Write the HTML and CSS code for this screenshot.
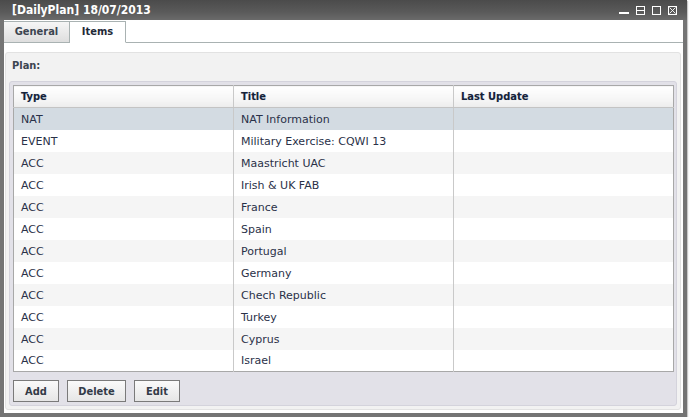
FILE: index.html
```html
<!DOCTYPE html>
<html>
<head>
<meta charset="utf-8">
<link rel="stylesheet" href="styles.css">
</head>
<body>
<div class="window">
  <div class="titlebar">
    <span class="title">[DailyPlan] 18/07/2013</span>
    <div class="controls">
      <svg class="ctl" width="10" height="9" viewBox="0 0 10 9"><rect x="0" y="6" width="10" height="2" fill="#fff"/></svg>
      <svg class="ctl" width="9" height="9" viewBox="0 0 9 9"><rect x="0.5" y="0.5" width="8" height="8" fill="none" stroke="#fff"/><line x1="0" y1="4.5" x2="9" y2="4.5" stroke="#fff"/></svg>
      <svg class="ctl" width="9" height="9" viewBox="0 0 9 9"><rect x="0.5" y="0.5" width="8" height="8" fill="none" stroke="#fff"/></svg>
      <svg class="ctl" width="9" height="9" viewBox="0 0 9 9"><rect x="0.5" y="0.5" width="8" height="8" fill="none" stroke="#fff"/><path d="M1.5 1.5 L7.5 7.5 M7.5 1.5 L1.5 7.5" stroke="#fff" stroke-width="0.9"/></svg>
    </div>
  </div>
  <div class="frame">
    <div class="tabs">
      <div class="tab">General</div>
      <div class="tab active">Items</div>
      <div class="tabfill"></div>
    </div>
    <div class="content">
      <div class="panel">
        <div class="plan">Plan:</div>
        <div class="gridbox">
          <table class="grid">
            <thead>
              <tr><th>Type</th><th>Title</th><th>Last Update</th></tr>
            </thead>
            <tbody>
              <tr class="sel"><td>NAT</td><td>NAT Information</td><td></td></tr>
              <tr><td>EVENT</td><td>Military Exercise: CQWI 13</td><td></td></tr>
              <tr class="alt"><td>ACC</td><td>Maastricht UAC</td><td></td></tr>
              <tr><td>ACC</td><td>Irish &amp; UK FAB</td><td></td></tr>
              <tr class="alt"><td>ACC</td><td>France</td><td></td></tr>
              <tr><td>ACC</td><td>Spain</td><td></td></tr>
              <tr class="alt"><td>ACC</td><td>Portugal</td><td></td></tr>
              <tr><td>ACC</td><td>Germany</td><td></td></tr>
              <tr class="alt"><td>ACC</td><td>Chech Republic</td><td></td></tr>
              <tr><td>ACC</td><td>Turkey</td><td></td></tr>
              <tr class="alt"><td>ACC</td><td>Cyprus</td><td></td></tr>
              <tr><td>ACC</td><td>Israel</td><td></td></tr>
            </tbody>
          </table>
          <div class="buttons">
            <button class="btn b-add">Add</button>
            <button class="btn b-del">Delete</button>
            <button class="btn b-edit">Edit</button>
          </div>
        </div>
      </div>
    </div>
  </div>
</div>
</body>
</html>
```

FILE: styles.css
```css
html, body {
  margin: 0;
  padding: 0;
  background: #ffffff;
}
body {
  font-family: "DejaVu Sans", sans-serif;
  font-size: 11px;
  color: #2a3148;
}
.window {
  width: 687px;
  height: 417px;
  display: flex;
  flex-direction: column;
  box-shadow: 1px 1px 1px #c8c8c8;
}
.titlebar {
  height: 20px;
  flex: none;
  background: linear-gradient(#4b4b4b, #5a5a5a 60%, #6a6a6a);
  display: flex;
  align-items: center;
  justify-content: space-between;
  padding: 0 10px 0 12px;
}
.title {
  color: #ffffff;
  font-family: "DejaVu Sans Condensed", "DejaVu Sans", sans-serif;
  font-weight: bold;
  font-size: 12px;
}
.controls {
  display: flex;
  gap: 7px;
  align-items: center;
  padding-top: 1px;
}
.ctl { display: block; }
.frame {
  flex: 1;
  display: flex;
  flex-direction: column;
  border: 4px solid #747474;
  border-top: none;
  background: #ffffff;
  min-height: 0;
}
.tabs {
  height: 22px;
  flex: none;
  display: flex;
  padding-top: 1px;
}
.tab {
  width: 66px;
  box-sizing: border-box;
  display: flex;
  align-items: center;
  justify-content: center;
  font-family: "DejaVu Sans Condensed", "DejaVu Sans", sans-serif;
  font-weight: bold;
  color: #3c4550;
  background: linear-gradient(#f6f6f6, #dedede);
  border: 1px solid #a9b2b2;
  border-left: none;
  padding-bottom: 1px;
}
.tab.active {
  width: 56px;
  background: #ffffff;
  border-bottom-color: #ffffff;
  color: #1f2a38;
}
.tabfill {
  flex: 1;
  border-bottom: 1px solid #a9b2b2;
}
.content {
  flex: 1;
  display: flex;
  flex-direction: column;
  padding: 9px 2px 3px 1px;
  min-height: 0;
}
.panel {
  flex: 1;
  display: flex;
  flex-direction: column;
  background: #f2f2f2;
  border: 1px solid #e2e2e2;
  border-radius: 3px;
  padding: 0 3px 3px 3px;
}
.plan {
  font-family: "DejaVu Sans Condensed", "DejaVu Sans", sans-serif;
  font-weight: bold;
  color: #3c4550;
  height: 28px;
  line-height: 26px;
  padding-left: 3px;
}
.gridbox {
  flex: 1;
  display: flex;
  flex-direction: column;
  background: #e2e1e8;
  border: 1px solid #d4d3dc;
  border-radius: 3px;
  padding: 3px 3px 2px 3px;
}
.grid {
  width: 661px;
  border-collapse: collapse;
  table-layout: fixed;
  background: #ffffff;
  border: 1px solid #a8a8a8;
}
.grid th, .grid td {
  width: 220px;
  height: 22px;
  padding: 0 0 0 7px;
  text-align: left;
  box-sizing: border-box;
  border-left: 1px solid #c9c9c9;
  white-space: nowrap;
}
.grid th:first-child, .grid td:first-child { border-left: none; }
.grid th {
  height: 22px;
  font-family: "DejaVu Sans Condensed", "DejaVu Sans", sans-serif;
  font-weight: bold;
  color: #14223a;
  background: linear-gradient(#ffffff, #f4f4f4 70%, #ececec);
  border-bottom: 1px solid #c4c4c4;
  text-shadow: 0 0 1px rgba(60, 90, 140, 0.25);
}
.grid td { padding-top: 1px; }
.grid tr.sel td { background: #d3dbe2; }
.grid tr.alt td { background: #f5f5f5; }
.buttons {
  display: flex;
  gap: 8px;
  margin-top: 8px;
}
.btn {
  height: 22px;
  font-family: "DejaVu Sans Condensed", "DejaVu Sans", sans-serif;
  font-size: 11px;
  font-weight: bold;
  color: #333b48;
  background: linear-gradient(#fafafa, #e6e6e6);
  border: 1px solid #7a7a7a;
  border-radius: 0;
  padding: 0;
  margin: 0;
}
.b-add { width: 46px; }
.b-del { width: 59px; }
.b-edit { width: 46px; }
```
